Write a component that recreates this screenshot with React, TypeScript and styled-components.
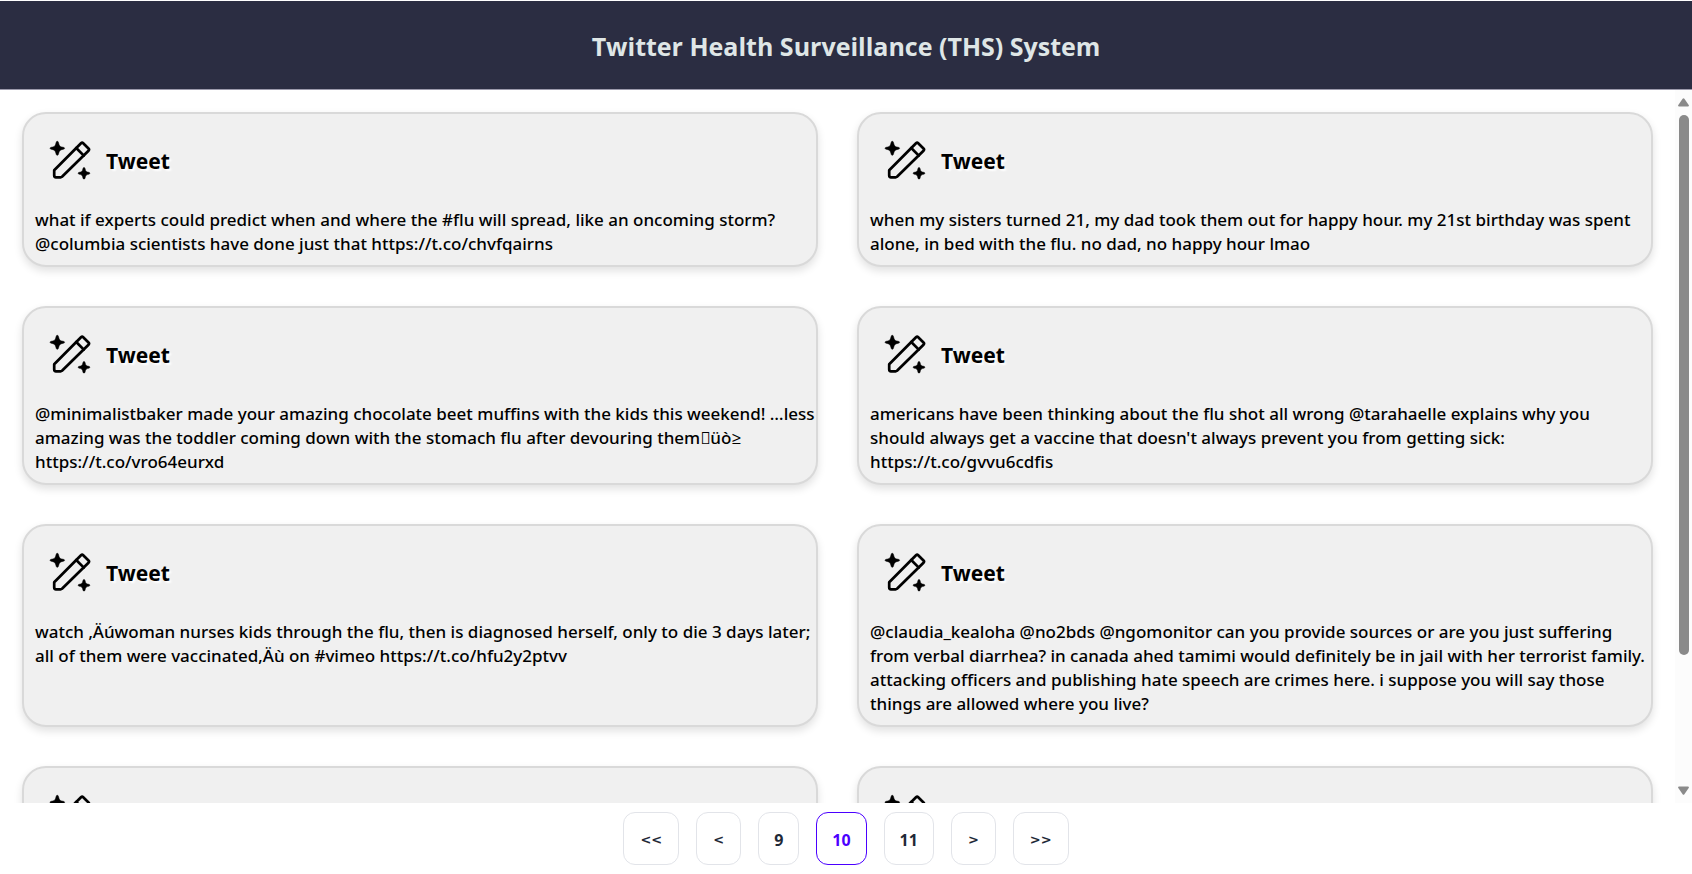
import React from "react";
import styled, { createGlobalStyle } from "styled-components";

const GlobalStyle = createGlobalStyle`
  *, *::before, *::after { box-sizing: border-box; }
  body {
    margin: 0;
    background: #fff;
    color: #000;
    font-family: "Noto Sans", "Open Sans", sans-serif;
  }
`;

const Page = styled.div`
  display: flex;
  flex-direction: column;
  height: 100vh;
  padding-top: 1px;
`;

const Header = styled.header`
  display: flex;
  flex: none;
  align-items: center;
  justify-content: center;
  height: 89px;
  padding-top: 2px;
  background: #2b2d42;
  border-bottom: 1px solid #9c9aac;
`;

const Title = styled.h1`
  margin: 0;
  color: #dfe6e6;
  font-family: "Open Sans", sans-serif;
  font-size: 25px;
  line-height: 32px;
  font-weight: 700;
`;

const Feed = styled.div`
  display: flex;
  flex: 1;
  min-height: 0;
`;

const Tweets = styled.main`
  display: grid;
  flex: 1;
  grid-template-columns: 1fr 1fr;
  grid-auto-rows: max-content;
  gap: 39px;
  padding: 22px;
  overflow-y: auto;
  scrollbar-width: none;
`;

const Card = styled.article`
  min-width: 0;
  padding: 10px 0 9px 11px;
  background: #f0f0f0;
  border: 2px solid #d9d9d9;
  border-radius: 24px;
  box-shadow: 0 4px 8px rgba(0, 0, 0, 0.12);
`;

const CardHead = styled.div`
  display: flex;
  align-items: center;
  gap: 12px;
  height: 84px;
  padding: 0 0 12px 11px;
`;

const Icon = styled.svg`
  flex: none;
  width: 48px;
  height: 48px;
`;

const CardTitle = styled.h2`
  margin: 0;
  padding-top: 2px;
  font-size: 21px;
  line-height: 28px;
  font-weight: 700;
  text-shadow: 2px 2px 2px #fff;
`;

const Body = styled.p`
  margin: 0;
  font-size: 17px;
  line-height: 24px;
  font-weight: 500;
  white-space: pre-line;
`;

const ScrollBar = styled.div`
  display: flex;
  flex: none;
  flex-direction: column;
  align-items: center;
  width: 17px;
  padding: 8px 0;
  background: #fcfcfc;
`;

const ScrollArrow = styled.svg`
  flex: none;
  width: 11px;
  height: 9px;
  fill: #8a8a8a;
`;

const Track = styled.div`
  flex: 1;
  width: 10px;
  margin: 8px 0;
`;

const Thumb = styled.div`
  height: calc(81% + 3px);
  background: #8a8a8a;
  border-radius: 5px;
`;

const Pagination = styled.nav`
  display: flex;
  flex: none;
  justify-content: center;
  gap: 17px;
  padding: 9px 0;
`;

const PageButton = styled.button<{ $active?: boolean; $arrow?: boolean }>`
  height: 53px;
  padding: 2px ${(p) => (p.$arrow ? 16 : 15)}px 0;
  background: #fff;
  border: 1px solid ${(p) => (p.$active ? "#4b00ff" : "#e2e4e9")};
  border-radius: 12px;
  color: ${(p) => (p.$active ? "#4b00ff" : "#1f2937")};
  font-family: ${(p) => (p.$arrow ? '"DejaVu Sans"' : '"Open Sans"')}, sans-serif;
  font-size: ${(p) => (p.$arrow ? 13 : 16)}px;
  line-height: 24px;
  font-weight: 700;
`;

const MagicPen = () => (
  <Icon viewBox="0 0 48 48" aria-hidden="true">
    <g fill="none" stroke="#000" strokeWidth="2.7" strokeLinejoin="round" strokeLinecap="round">
      <path d="M8.200 34.200 35 7.200q1.100-1.100 2.200 0l5.300 5.300q1.100 1.100 0 2.200L16 40.800q-.6.500-1.400.5H10q-1.800 0-1.800-1.800Z" />
      <path d="m30.200 12 7.600 7.600" />
    </g>
    <g stroke="#000" strokeWidth=".5">
      <path d="M11.300 5.300q.9 0 1.100 1 .6 3.400 2 4.200 1 .5 3 .8 1.200.3 1.200 1t-1.200 1q-2 .3-3 .9-1.400.9-2 4.100-.2 1-1.100 1t-1.100-1q-.6-3.200-2-4.100-1-.6-3-.9Q4 13 4 12.300t1.200-1q2-.3 3-.8 1.400-.8 2-4.200.2-1 1.100-1Z" />
      <path d="M38 31.500q.8 0 1 .9.4 2.300 1.400 3.100.6.500 2.300.8 1.100.2 1.100 1t-1.100 1q-1.700.3-2.300.8-1 .8-1.400 3.100-.2.9-1 .9t-1-.9q-.4-2.300-1.400-3.100-.6-.5-2.300-.8-1.100-.2-1.100-1t1.100-1q1.700-.3 2.300-.8 1-.8 1.400-3.100.2-.9 1-.9Z" />
    </g>
  </Icon>
);

const tweets = [
  "what if experts could predict when and where the #flu will spread, like an oncoming storm? @columbia scientists have done just that https://t.co/chvfqairns",
  "when my sisters turned 21, my dad took them out for happy hour. my 21st birthday was spent alone, in bed with the flu. no dad, no happy hour lmao",
  "@minimalistbaker made your amazing chocolate beet muffins with the kids this weekend! …less amazing was the toddler coming down with the stomach flu after devouring them\uF8FFüò≥ https://t.co/vro64eurxd",
  "americans have been thinking about the flu shot all wrong @tarahaelle explains why you\nshould always get a vaccine that doesn't always prevent you from getting sick:\nhttps://t.co/gvvu6cdfis",
  "watch ‚Äúwoman nurses kids through the flu, then is diagnosed herself, only to die 3 days later; all of them were vaccinated‚Äù on #vimeo https://t.co/hfu2y2ptvv",
  "@claudia_kealoha @no2bds @ngomonitor can you provide sources or are you just suffering from verbal diarrhea? in canada ahed tamimi would definitely be in jail with her terrorist family. attacking officers and publishing hate speech are crimes here. i suppose you will say those things are allowed where you live?",
  "",
  "",
];

const pages = [
  { label: "<<", arrow: true },
  { label: "<", arrow: true },
  { label: "9" },
  { label: "10", active: true },
  { label: "11" },
  { label: ">", arrow: true },
  { label: ">>", arrow: true },
];

export default function App() {
  return (
    <Page>
      <GlobalStyle />
      <Header>
        <Title>Twitter Health Surveillance (THS) System</Title>
      </Header>
      <Feed>
        <Tweets>
          {tweets.map((text, i) => (
            <Card key={i}>
              <CardHead>
                <MagicPen />
                {text && <CardTitle>Tweet</CardTitle>}
              </CardHead>
              <Body>{text}</Body>
            </Card>
          ))}
        </Tweets>
        <ScrollBar aria-hidden="true">
          <ScrollArrow viewBox="0 0 11 9">
            <path d="M4.600.7q.9-1.100 1.800 0L10.700 7q.8 1.500-.9 1.500H1.200Q-.5 8.500.3 7Z" />
          </ScrollArrow>
          <Track>
            <Thumb />
          </Track>
          <ScrollArrow viewBox="0 0 11 9">
            <path d="M4.600 8.300q.9 1.100 1.800 0L10.700 2q.8-1.500-.9-1.500H1.200Q-.5.5.3 2Z" />
          </ScrollArrow>
        </ScrollBar>
      </Feed>
      <Pagination aria-label="Pages">
        {pages.map((p) => (
          <PageButton
            key={p.label}
            type="button"
            $active={p.active}
            $arrow={p.arrow}
            aria-current={p.active ? "page" : undefined}
          >
            {p.label}
          </PageButton>
        ))}
      </Pagination>
    </Page>
  );
}
